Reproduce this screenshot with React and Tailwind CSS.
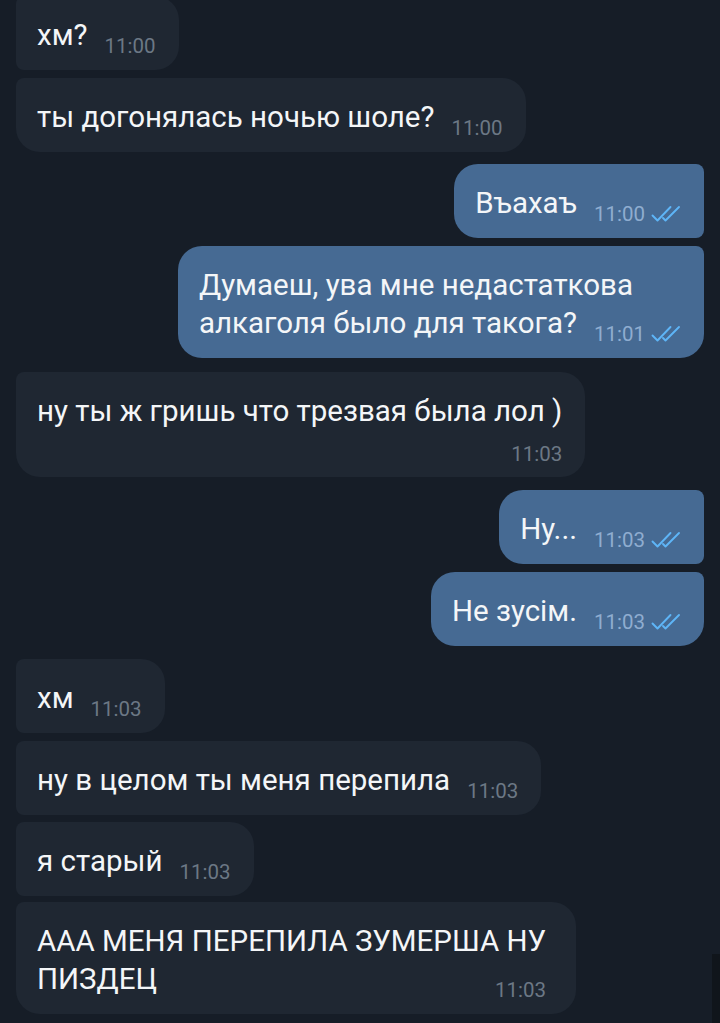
import React from "react";

const Checks = () => (
  <svg width="34" height="18" viewBox="0 0 34 18" fill="none" className="ml-[6px] shrink-0">
    <path d="M1.5 10.5 L6.5 15.5 L19.5 2" stroke="#5eb5f7" strokeWidth="1.9" strokeLinecap="round" strokeLinejoin="round" />
    <path d="M12 13 L14.5 15.5 L28 2" stroke="#5eb5f7" strokeWidth="1.9" strokeLinecap="round" strokeLinejoin="round" />
  </svg>
);

function Time({ t, out, block }) {
  return (
    <span
      className={
        "inline-flex items-center shrink-0 text-[20.5px] leading-[20px] " +
        (out ? "text-[#8fadd0] " : "text-[#6c7885] ") +
        (block ? "" : "ml-[17px] translate-y-[2px] ")
      }
    >
      <span>{t}</span>
      {out && <Checks />}
    </span>
  );
}

function Bubble({ out, lines, time, block, mt, rounded, pr }) {
  const last = lines.length - 1;
  const padR = pr || (out ? "pr-[19px]" : "pr-[23px]");
  return (
    <div className={"flex " + (out ? "justify-end " : "justify-start ") + mt}>
      <div
        className={
          "pt-[20px] pb-[16px] pl-[21px] text-[29.5px] leading-[38px] text-[#f4f6f8] " +
          (out ? "bg-[#466a93] " : "bg-[#1f2732] ") +
          padR +
          " " +
          rounded
        }
      >
        {lines.map((l, i) =>
          i === last && !block ? (
            <div key={i} className="flex items-end">
              <span className="whitespace-nowrap">{l}</span>
              <span className="ml-auto flex">
                <Time t={time} out={out} />
              </span>
            </div>
          ) : (
            <div key={i} className="whitespace-nowrap">{l}</div>
          )
        )}
        {block && (
          <div className="flex justify-end mt-[14px] mb-[-3px]">
            <Time t={time} out={out} block />
          </div>
        )}
      </div>
    </div>
  );
}

export default function App() {
  const inMid = "rounded-tl-[8px] rounded-bl-[8px] rounded-tr-[24px] rounded-br-[24px]";
  const inLast = "rounded-tl-[8px] rounded-bl-[24px] rounded-tr-[24px] rounded-br-[24px]";
  const outMid = "rounded-tr-[8px] rounded-br-[8px] rounded-tl-[24px] rounded-bl-[24px]";
  const outLast = "rounded-tr-[8px] rounded-br-[24px] rounded-tl-[24px] rounded-bl-[24px]";
  return (
    <div
      className="relative w-[720px] h-[1023px] overflow-hidden bg-[#161d27] px-[16px]"
      style={{ fontFamily: "Roboto, 'Noto Sans', sans-serif" }}
    >
      <div className="flex flex-col -mt-[4px]">
        <Bubble lines={["хм?"]} time="11:00" mt="" rounded={inMid} />
        <Bubble lines={["ты догонялась ночью шоле?"]} time="11:00" mt="mt-[8px]" rounded={inLast} />
        <Bubble out lines={["Въахаъ"]} time="11:00" mt="mt-[12px]" rounded={outMid} />
        <Bubble
          out
          lines={["Думаеш, ува мне недастаткова", "алкаголя было для такога?"]}
          time="11:01"
          mt="mt-[8px]"
          rounded={outLast}
        />
        <Bubble lines={["ну ты ж гришь что трезвая была лол )"]} time="11:03" block mt="mt-[14px]" rounded={inLast} />
        <Bubble out lines={["Ну..."]} time="11:03" mt="mt-[13px]" rounded={outMid} />
        <Bubble out lines={["Не зусім."]} time="11:03" mt="mt-[8px]" rounded={outLast} />
        <Bubble lines={["хм"]} time="11:03" mt="mt-[13px]" rounded={inMid} />
        <Bubble lines={["ну в целом ты меня перепила"]} time="11:03" mt="mt-[8px]" rounded={inMid} />
        <Bubble lines={["я старый"]} time="11:03" mt="mt-[7px]" rounded={inMid} />
        <Bubble
          lines={["ААА МЕНЯ ПЕРЕПИЛА ЗУМЕРША НУ", "ПИЗДЕЦ"]}
          time="11:03"
          mt="mt-[6px]"
          rounded={inLast}
          pr="pr-[30px]"
        />
      </div>
      <div className="absolute right-0 top-[954px] w-[8px] h-[69px] bg-[#10151b]" />
    </div>
  );
}
